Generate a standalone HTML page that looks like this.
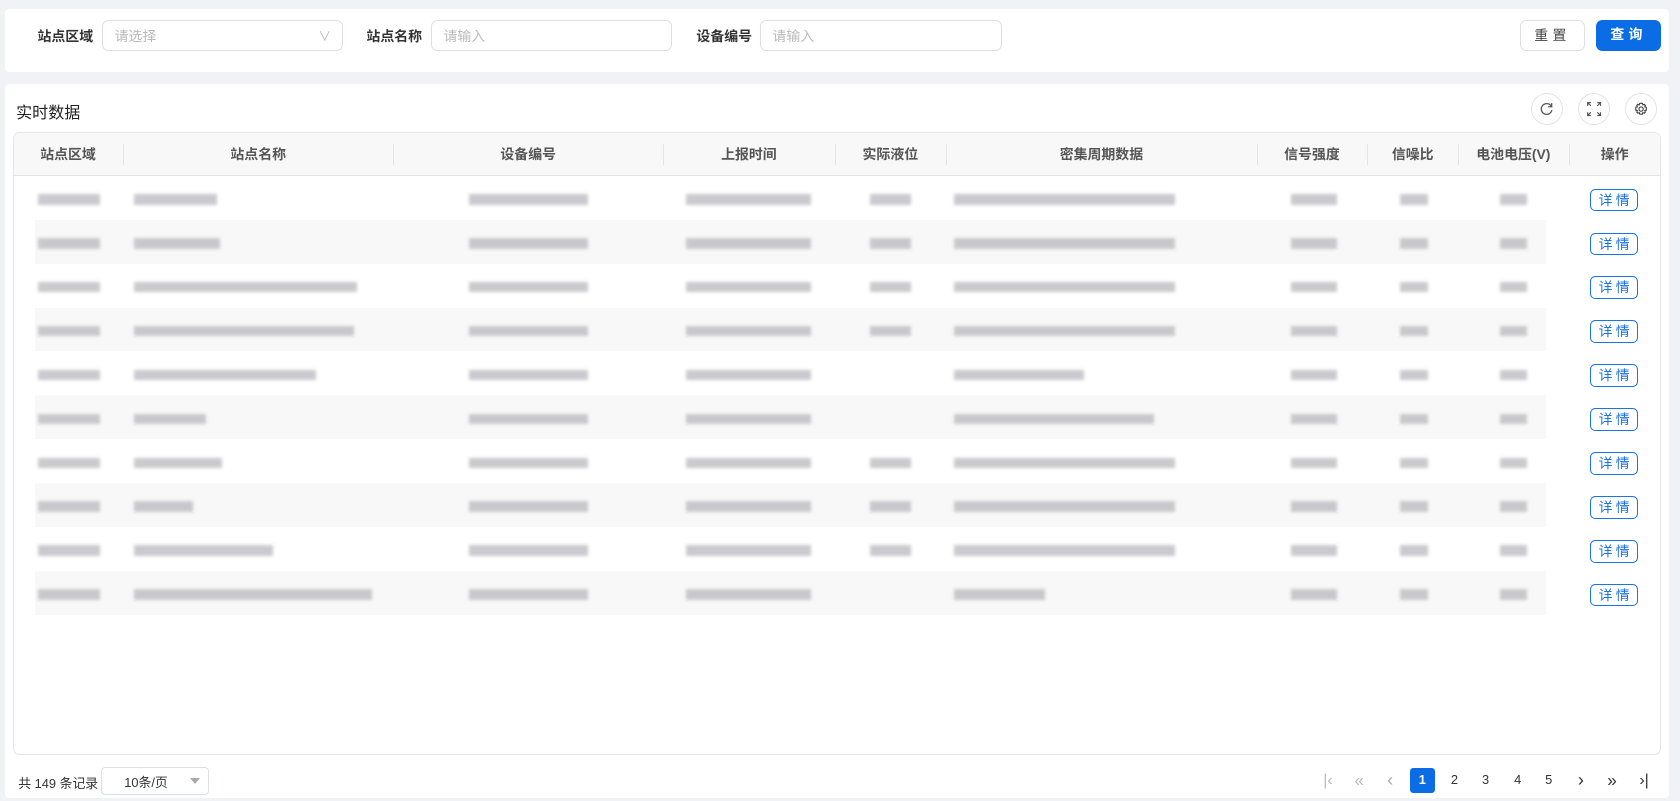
<!DOCTYPE html>
<html><head><meta charset="utf-8"><style>
*{box-sizing:border-box;margin:0;padding:0}
html,body{width:1680px;height:801px;overflow:hidden;background:#f0f2f5}
#root{zoom:1.071429;width:1568px;height:748px;position:relative;font-family:"Liberation Sans","Noto Sans CJK SC",sans-serif;font-size:13px;color:#333}
.abs{position:absolute}
.panel{position:absolute;background:#fff;border-radius:4px}
.lbl{position:absolute;font-size:13px;font-weight:bold;color:#333;top:24px}
.inp{position:absolute;top:19px;height:29px;border:1px solid #dcdfe6;border-radius:6px;color:#bbb;font-size:13px;padding:4px 11px}
.btn{position:absolute;top:19px;height:29px;border-radius:6px;font-size:13px;text-align:center;line-height:27px;letter-spacing:4px}
.circ{position:absolute;top:87px;width:30px;height:30px;border:1px solid #e3e3e3;border-radius:50%}
.th{position:absolute;top:124px;height:40px;line-height:40px;font-weight:bold;color:#555;text-align:center;font-size:13px}
.sep{position:absolute;top:134px;width:1px;height:20px;background:#e5e5e5}
.b{position:absolute;height:10px;background:#bdbdc2;filter:blur(1.6px);opacity:.8}
.stripe{position:absolute;left:33px;width:1410px;height:41px;background:#f8f8f8}
.det{position:absolute;left:1484px;width:45px;height:21px;border:1px solid #1a73e8;border-radius:5px;color:#1a73e8;font-size:13px;text-align:center;line-height:19px;letter-spacing:3px;padding-left:3px;background:#fff}
.pg{position:absolute;top:717px;width:23px;height:23px;line-height:23px;text-align:center;font-size:12px;color:#333}
</style></head><body><div id="root">
<div class="panel" style="left:5px;top:8px;width:1553px;height:59px"></div>
<div class="lbl" style="left:35px">站点区域</div>
<div class="inp" style="left:95px;width:225px">请选择<span class="abs" style="right:10px;top:4px;color:#bbb;font-size:12px">&#8744;</span></div>
<div class="lbl" style="left:342px">站点名称</div>
<div class="inp" style="left:402px;width:225px">请输入</div>
<div class="lbl" style="left:650px">设备编号</div>
<div class="inp" style="left:709px;width:226px">请输入</div>
<div class="btn" style="left:1419px;width:60px;border:1px solid #dcdfe6;color:#444;background:#fff">重置</div>
<div class="btn" style="left:1490px;width:60px;background:#0a6de6;color:#fff;font-weight:bold">查询</div>

<div class="panel" style="left:5px;top:78px;width:1553px;height:667px"></div>
<div class="abs" style="left:15px;top:92px;font-size:15px;color:#222">实时数据</div>
<div class="circ" style="left:1429px"><svg width="30" height="30" viewBox="0 0 30 30" style="position:absolute;left:-1px;top:-1px"><path d="M19 12.5A5 5 0 1 0 19.5 16" fill="none" stroke="#555" stroke-width="1.2"/><path d="M19.3 9.5v3.3h-3.3" fill="none" stroke="#555" stroke-width="1.2"/></svg></div>
<div class="circ" style="left:1473px"><svg width="30" height="30" viewBox="0 0 30 30" style="position:absolute;left:-1px;top:-1px" fill="none" stroke="#555" stroke-width="1.1"><path d="M9 12V9h3M9 9l3 3M21 12V9h-3M21 9l-3 3M9 18v3h3M9 21l3-3M21 18v3h-3M21 21l-3-3"/></svg></div>
<div class="circ" style="left:1517px"><svg width="30" height="30" viewBox="0 0 30 30" style="position:absolute;left:-1px;top:-1px" fill="none" stroke="#444" stroke-width="1.1"><path d="M15 9.5l1.3.3.4 1.3 1.3-.5 1 1-.5 1.3 1.3.4.2 1.4-.2 1.4-1.3.4.5 1.3-1 1-1.3-.5-.4 1.3-1.3.3-1.3-.3-.4-1.3-1.3.5-1-1 .5-1.3-1.3-.4-.2-1.4.2-1.4 1.3-.4-.5-1.3 1-1 1.3.5.4-1.3z"/><circle cx="15" cy="15" r="2"/></svg></div>

<div class="abs" style="left:12px;top:123px;width:1538px;height:582px;border:1px solid #e5e5e5;border-radius:6px;background:#fff;overflow:hidden">
<div class="abs" style="left:0;top:0;width:100%;height:40px;background:#f8f8f9;border-bottom:1px solid #e5e5e5"></div>
</div>
<div class="th" style="left:12px;width:103px">站点区域</div>
<div class="th" style="left:115px;width:252px">站点名称</div>
<div class="th" style="left:367px;width:252px">设备编号</div>
<div class="th" style="left:619px;width:160px">上报时间</div>
<div class="th" style="left:779px;width:104px">实际液位</div>
<div class="th" style="left:883px;width:290px">密集周期数据</div>
<div class="th" style="left:1173px;width:103px">信号强度</div>
<div class="th" style="left:1276px;width:85px">信噪比</div>
<div class="th" style="left:1361px;width:103px">电池电压(V)</div>
<div class="th" style="left:1464px;width:86px">操作</div>
<div class="sep" style="left:115px"></div><div class="sep" style="left:367px"></div><div class="sep" style="left:619px"></div><div class="sep" style="left:779px"></div><div class="sep" style="left:883px"></div><div class="sep" style="left:1173px"></div><div class="sep" style="left:1276px"></div><div class="sep" style="left:1361px"></div><div class="sep" style="left:1464px"></div>

<div id="rows"></div>

<div class="abs" style="left:17px;top:721px;font-size:12px;color:#333">共 149 条记录</div>
<div class="abs" style="left:94px;top:716px;width:101px;height:26px;border:1px solid #dcdfe6;border-radius:4px;font-size:12px;padding:4px 0 0 21px">10条/页<span class="abs" style="right:7px;top:9px;width:0;height:0;border-left:5px solid transparent;border-right:5px solid transparent;border-top:6px solid #aaa"></span></div>
<div class="pg" style="left:1228px;color:#bbb;font-size:15px">|&lsaquo;</div>
<div class="pg" style="left:1257px;color:#bbb;font-size:16px">&laquo;</div>
<div class="pg" style="left:1286px;color:#aaa;font-size:17px">&lsaquo;</div>
<div class="pg" style="left:1316px;background:#0a6de6;color:#fff;border-radius:3px;font-weight:bold">1</div>
<div class="pg" style="left:1346px">2</div>
<div class="pg" style="left:1375px">3</div>
<div class="pg" style="left:1405px">4</div>
<div class="pg" style="left:1434px">5</div>
<div class="pg" style="left:1464px;font-size:17px">&rsaquo;</div>
<div class="pg" style="left:1493px;font-size:16px">&raquo;</div>
<div class="pg" style="left:1523px;font-size:15px">&rsaquo;|</div>
</div>
<script>
var names=[78,80,208,205,170,67,82,55,130,222],dense=[207,207,207,207,122,187,207,207,207,85],lvl=[1,1,1,1,0,0,1,1,1,0];
var h='';
for(var i=0;i<10;i++){var y=164+i*41,c=y+17;
if(i%2==1)h+='<div class="stripe" style="top:'+(y)+'px"></div>';
function b(x,w){h+='<div class="b" style="left:'+x+'px;top:'+c+'px;width:'+w+'px"></div>';}
b(35,58);b(125,names[i]);b(438,111);b(640,117);if(lvl[i])b(812,38);b(890,dense[i]);b(1205,43);b(1307,26);b(1400,25);
h+='<div class="det" style="top:'+(y+12)+'px">详情</div>';}
document.getElementById('rows').innerHTML=h;
</script>
</body></html>
